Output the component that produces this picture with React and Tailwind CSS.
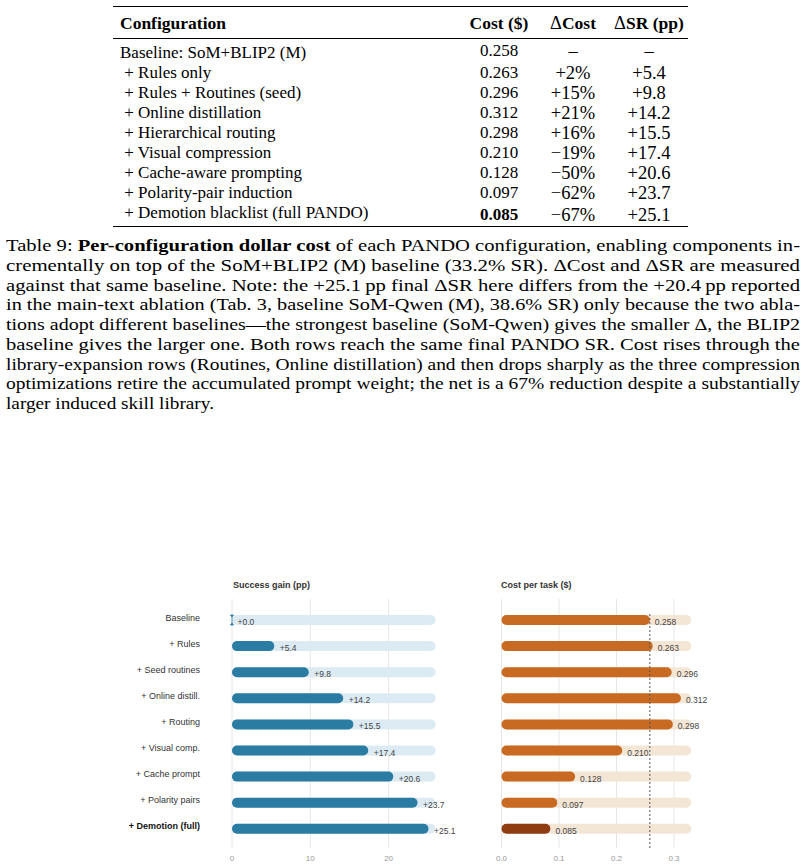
import React, { useLayoutEffect, useRef, useState } from 'react'

const rows = [
  ['Baseline: SoM+BLIP2 (M)', '0.258', '–', '–'],
  ['\u00a0+ Rules only', '0.263', '+2%', '+5.4'],
  ['\u00a0+ Rules + Routines (seed)', '0.296', '+15%', '+9.8'],
  ['\u00a0+ Online distillation', '0.312', '+21%', '+14.2'],
  ['\u00a0+ Hierarchical routing', '0.298', '+16%', '+15.5'],
  ['\u00a0+ Visual compression', '0.210', '\u221219%', '+17.4'],
  ['\u00a0+ Cache-aware prompting', '0.128', '\u221250%', '+20.6'],
  ['\u00a0+ Polarity-pair induction', '0.097', '\u221262%', '+23.7'],
  ['\u00a0+ Demotion blacklist (full PANDO)', '0.085', '\u221267%', '+25.1'],
]

const bars = [
  { label: 'Baseline', sr: 0.0, cost: 0.258 },
  { label: '+ Rules', sr: 5.4, cost: 0.263 },
  { label: '+ Seed routines', sr: 9.8, cost: 0.296 },
  { label: '+ Online distill.', sr: 14.2, cost: 0.312 },
  { label: '+ Routing', sr: 15.5, cost: 0.298 },
  { label: '+ Visual comp.', sr: 17.4, cost: 0.21 },
  { label: '+ Cache prompt', sr: 20.6, cost: 0.128 },
  { label: '+ Polarity pairs', sr: 23.7, cost: 0.097 },
  { label: '+ Demotion (full)', sr: 25.1, cost: 0.085, full: true },
]

const captionLines = [
  <>Table 9: <b>Per-configuration dollar cost</b> of each PANDO configuration, enabling components in-</>,
  <>crementally on top of the SoM+BLIP2 (M) baseline (33.2% SR). ΔCost and ΔSR are measured</>,
  <>against that same baseline. Note: the +25.1&thinsp;pp final ΔSR here differs from the +20.4&thinsp;pp reported</>,
  <>in the main-text ablation (Tab. 3, baseline SoM-Qwen (M), 38.6% SR) only because the two abla-</>,
  <>tions adopt different baselines—the strongest baseline (SoM-Qwen) gives the smaller Δ, the BLIP2</>,
  <>baseline gives the larger one. Both rows reach the same final PANDO SR. Cost rises through the</>,
  <>library-expansion rows (Routines, Online distillation) and then drops sharply as the three compression</>,
  <>optimizations retire the accumulated prompt weight; the net is a 67% reduction despite a substantially</>,
]

// stretch/squeeze each caption line to the full column width, as the typeset page does
const FitLine = ({ children, fixed }) => {
  const ref = useRef(null)
  const [s, setS] = useState(fixed || 1)
  useLayoutEffect(() => {
    if (fixed) return
    const w = ref.current.getBoundingClientRect().width
    if (w > 0) setS(794 / w)
  }, [fixed])
  return (
    <div className="h-[19.75px] whitespace-nowrap">
      <span ref={ref} className="inline-block origin-left" style={{ transform: `scaleX(${s})` }}>
        {children}
      </span>
    </div>
  )
}

const Chart = () => {
  const x0 = 232
  const k = 7.83
  const c0 = 501.5
  const ck = 575
  return (
    <svg width="808" height="308" viewBox="0 560 808 308" style={{ fontFamily: '"Liberation Sans", Arial, sans-serif' }}>
      <text x="233" y="588" fontSize="9" fontWeight="bold" fill="#333">Success gain (pp)</text>
      <text x="501" y="588" fontSize="9" fontWeight="bold" fill="#333">Cost per task ($)</text>
      {[0, 10, 20].map((t) => (
        <g key={t}>
          <line x1={x0 + t * k} x2={x0 + t * k} y1="599" y2="848" stroke="#e6e6e6" strokeWidth="1" />
          <text x={x0 + t * k} y="861" fontSize="8" fill="#999" textAnchor="middle">{t}</text>
        </g>
      ))}
      {[0, 0.1, 0.2, 0.3].map((t) => (
        <g key={t}>
          <line x1={c0 + t * ck} x2={c0 + t * ck} y1="599" y2="848" stroke="#e6e6e6" strokeWidth="1" />
          <text x={c0 + t * ck} y="861" fontSize="8" fill="#999" textAnchor="middle">{t.toFixed(1)}</text>
        </g>
      ))}
      {bars.map((b, i) => {
        const cy = 620 + i * 26.1
        const w = b.sr * k
        const cw = b.cost * ck
        return (
          <g key={b.label}>
            <text x="200" y={cy + 0.5} fontSize="9" textAnchor="end" fill={b.full ? '#111' : '#333'} fontWeight={b.full ? 'bold' : 'normal'}>{b.label}</text>
            <rect x={x0} y={cy - 5} width={26 * k} height="10" rx="5" fill="#dcebf3" />
            {w > 0 ? (
              <rect x={x0} y={cy - 5} width={w} height="10" rx="5" fill="#2a7ca3" />
            ) : (
              <path d={`M${x0 - 1.5} ${cy - 5} h3 l-1.5 2 z M${x0} ${cy - 3} v6 M${x0 - 1.5} ${cy + 5} h3 l-1.5 -2 z`} fill="#2a7ca3" stroke="#2a7ca3" strokeWidth="0.8" />
            )}
            <text x={x0 + w + 5.5} y={cy + 5} fontSize="8.5" fill="#444">+{b.sr.toFixed(1)}</text>
            <rect x={c0} y={cy - 5} width={0.33 * ck} height="10" rx="5" fill="#f4e6d5" />
            <rect x={c0} y={cy - 5} width={cw} height="10" rx="5" fill={b.full ? '#8f3d10' : '#c96a22'} />
            <text x={c0 + cw + 5} y={cy + 5} fontSize="8.5" fill="#444">{b.cost.toFixed(3)}</text>
          </g>
        )
      })}
      <line x1={c0 + 0.258 * ck} x2={c0 + 0.258 * ck} y1="614" y2="848" stroke="#555" strokeWidth="1" strokeDasharray="2 2" />
    </svg>
  )
}

export default function App() {
  return (
    <div className="w-[808px] h-[868px] bg-white overflow-hidden text-black [font-family:'Liberation_Serif',serif]">
      <div className="h-[232px] pt-[6px]">
        <table className="ml-[113px] w-[575px] border-collapse table-fixed text-[17px] leading-[20px]">
          <colgroup>
            <col className="w-[349px]" />
            <col className="w-[74px]" />
            <col className="w-[74px]" />
            <col className="w-[78px]" />
          </colgroup>
          <thead>
            <tr className="border-t-[1.5px] border-b border-black text-[17.5px]">
              <th className="text-left font-bold pl-[7px] pt-[6px] pb-[5px]">Configuration</th>
              <th className="font-bold text-center whitespace-nowrap">Cost ($)</th>
              <th className="font-bold text-center whitespace-nowrap"><span className="font-normal text-[18.5px]">Δ</span>Cost</th>
              <th className="font-bold text-center whitespace-nowrap"><span className="font-normal text-[18.5px]">Δ</span>SR (pp)</th>
            </tr>
          </thead>
          <tbody className="border-b-[1.5px] border-black">
            {rows.map((r, i) => (
              <tr key={i}>
                <td className={`pl-[7px] whitespace-pre ${i === 0 ? 'pt-[4px]' : ''} ${i === rows.length - 1 ? 'pb-[3px]' : ''}`}>{r[0]}</td>
                <td className={`text-center ${i === rows.length - 1 ? 'font-bold' : ''}`}>{r[1]}</td>
                <td className="text-center text-[18.5px]">{r[2]}</td>
                <td className="text-center text-[18.5px]">{r[3]}</td>
              </tr>
            ))}
          </tbody>
        </table>
      </div>
      <div className="h-[328px] px-[6px] text-[17.5px] leading-[19.75px] pt-[4px]">
        {captionLines.map((l, i) => (
          <FitLine key={i}>{l}</FitLine>
        ))}
        <FitLine fixed={1.1}>larger induced skill library.</FitLine>
      </div>
      <Chart />
    </div>
  )
}
